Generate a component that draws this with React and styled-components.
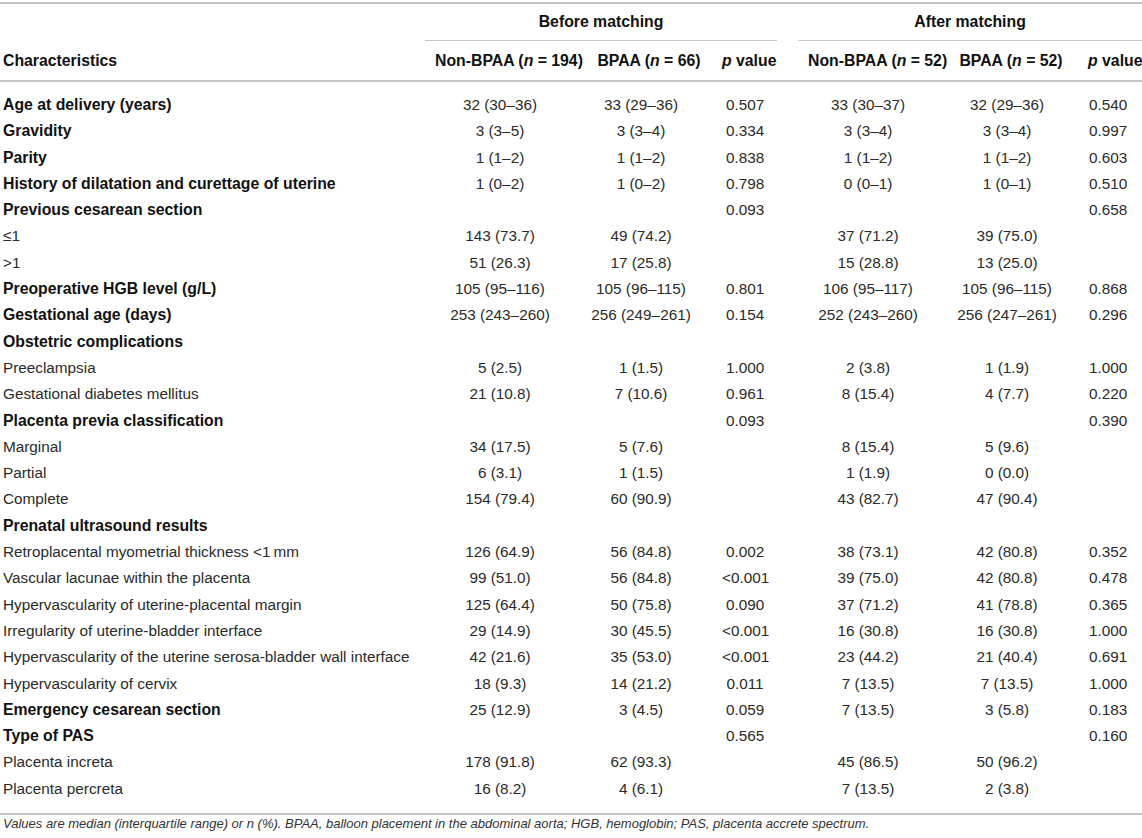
import React from "react";
import styled, { createGlobalStyle } from "styled-components";

const GlobalStyle = createGlobalStyle`
  html, body {
    margin: 0;
    padding: 0;
    background: #fff;
    overflow: hidden;
  }
  body {
    font-family: "Liberation Sans", Arial, Helvetica, sans-serif;
    color: #2a2a2a;
  }
`;

const Page = styled.div`
  width: 1142px;
  padding-top: 2px;
`;

const Table = styled.table`
  width: 1142px;
  table-layout: fixed;
  border-collapse: separate;
  border-spacing: 0;
  border-top: 2px solid #c3c3c3;
  border-bottom: 2px solid #c3c3c3;
  font-size: 15.3px;
`;

const HeadCell = styled.th`
  font-weight: bold;
  font-size: 15.8px;
  color: #111;
  white-space: nowrap;
  text-align: ${(p) => (p.$left ? "left" : "center")};
  padding: ${(p) => (p.$top ? "8px 3px 9px" : "10px 3px")};
  padding-left: ${(p) => (p.$left ? 3 : (p.$pad || 10) + (p.$shift || 0))}px;
  padding-right: ${(p) => (p.$left ? 3 : (p.$pad || 10) - (p.$shift || 0))}px;
  line-height: 19px;
  border-bottom: ${(p) =>
    p.$group ? "1px solid #c8c8c8" : p.$top ? "none" : "2px solid #c3c3c3"};
`;

const Row = styled.tr`
  &:first-child td {
    padding-top: 14px;
  }
  &:last-child td {
    padding-bottom: 15px;
  }
`;

const Cell = styled.td`
  padding: 4px 0;
  padding-left: ${(p) => (p.$left ? 3 : (p.$pad || 10) + (p.$shift || 0))}px;
  padding-right: ${(p) => (p.$left ? 3 : (p.$pad || 10) - (p.$shift || 0))}px;
  line-height: 18.3px;
  white-space: nowrap;
  text-align: ${(p) => (p.$left ? "left" : "center")};
  font-weight: ${(p) => (p.$bold ? "bold" : "normal")};
  font-size: ${(p) => (p.$bold ? "15.8px" : "15.3px")};
  color: ${(p) => (p.$bold ? "#111" : "#2a2a2a")};
`;

const Note = styled.p`
  margin: 0;
  padding: 1px 3px 0;
  font-size: 13px;
  line-height: 16px;
  font-style: italic;
  color: #333;
  white-space: nowrap;
`;

const I = styled.i`
  font-style: italic;
`;

// column widths: label, before x3, gap, after x3
const widths = [425, 152, 138, 62, 21, 140, 142, 62];
// side padding and horizontal shift of centred text per value column
const pads = [10, 10, 8, 10, 10, 4];
const dataShift = [-1, -5, -1, 0, -2, -3];
const headShift = [0, 3, -1, 0, 2, 4];

const rows = [
  ["Age at delivery (years)", true, "32 (30–36)", "33 (29–36)", "0.507", "33 (30–37)", "32 (29–36)", "0.540"],
  ["Gravidity", true, "3 (3–5)", "3 (3–4)", "0.334", "3 (3–4)", "3 (3–4)", "0.997"],
  ["Parity", true, "1 (1–2)", "1 (1–2)", "0.838", "1 (1–2)", "1 (1–2)", "0.603"],
  ["History of dilatation and curettage of uterine", true, "1 (0–2)", "1 (0–2)", "0.798", "0 (0–1)", "1 (0–1)", "0.510"],
  ["Previous cesarean section", true, "", "", "0.093", "", "", "0.658"],
  ["≤1", false, "143 (73.7)", "49 (74.2)", "", "37 (71.2)", "39 (75.0)", ""],
  [">1", false, "51 (26.3)", "17 (25.8)", "", "15 (28.8)", "13 (25.0)", ""],
  ["Preoperative HGB level (g/L)", true, "105 (95–116)", "105 (96–115)", "0.801", "106 (95–117)", "105 (96–115)", "0.868"],
  ["Gestational age (days)", true, "253 (243–260)", "256 (249–261)", "0.154", "252 (243–260)", "256 (247–261)", "0.296"],
  ["Obstetric complications", true, "", "", "", "", "", ""],
  ["Preeclampsia", false, "5 (2.5)", "1 (1.5)", "1.000", "2 (3.8)", "1 (1.9)", "1.000"],
  ["Gestational diabetes mellitus", false, "21 (10.8)", "7 (10.6)", "0.961", "8 (15.4)", "4 (7.7)", "0.220"],
  ["Placenta previa classification", true, "", "", "0.093", "", "", "0.390"],
  ["Marginal", false, "34 (17.5)", "5 (7.6)", "", "8 (15.4)", "5 (9.6)", ""],
  ["Partial", false, "6 (3.1)", "1 (1.5)", "", "1 (1.9)", "0 (0.0)", ""],
  ["Complete", false, "154 (79.4)", "60 (90.9)", "", "43 (82.7)", "47 (90.4)", ""],
  ["Prenatal ultrasound results", true, "", "", "", "", "", ""],
  ["Retroplacental myometrial thickness <1\u2009mm", false, "126 (64.9)", "56 (84.8)", "0.002", "38 (73.1)", "42 (80.8)", "0.352"],
  ["Vascular lacunae within the placenta", false, "99 (51.0)", "56 (84.8)", "<0.001", "39 (75.0)", "42 (80.8)", "0.478"],
  ["Hypervascularity of uterine-placental margin", false, "125 (64.4)", "50 (75.8)", "0.090", "37 (71.2)", "41 (78.8)", "0.365"],
  ["Irregularity of uterine-bladder interface", false, "29 (14.9)", "30 (45.5)", "<0.001", "16 (30.8)", "16 (30.8)", "1.000"],
  ["Hypervascularity of the uterine serosa-bladder wall interface", false, "42 (21.6)", "35 (53.0)", "<0.001", "23 (44.2)", "21 (40.4)", "0.691"],
  ["Hypervascularity of cervix", false, "18 (9.3)", "14 (21.2)", "0.011", "7 (13.5)", "7 (13.5)", "1.000"],
  ["Emergency cesarean section", true, "25 (12.9)", "3 (4.5)", "0.059", "7 (13.5)", "3 (5.8)", "0.183"],
  ["Type of PAS", true, "", "", "0.565", "", "", "0.160"],
  ["Placenta increta", false, "178 (91.8)", "62 (93.3)", "", "45 (86.5)", "50 (96.2)", ""],
  ["Placenta percreta", false, "16 (8.2)", "4 (6.1)", "", "7 (13.5)", "2 (3.8)", ""],
];

const groupHeads = (n1, n2) => [
  <>Non-BPAA (<I>n</I> = {n1})</>,
  <>BPAA (<I>n</I> = {n2})</>,
  <><I>p</I> value</>,
];

export default function App() {
  const heads = [...groupHeads(194, 66), ...groupHeads(52, 52)];
  const headCells = (from) =>
    heads.slice(from, from + 3).map((h, i) => (
      <HeadCell key={i} $pad={pads[from + i]} $shift={headShift[from + i]}>
        {h}
      </HeadCell>
    ));
  const valueCells = (vals, from) =>
    vals.slice(from, from + 3).map((v, i) => (
      <Cell key={i} $pad={pads[from + i]} $shift={dataShift[from + i]}>
        {v}
      </Cell>
    ));

  return (
    <Page>
      <GlobalStyle />
      <Table>
        <colgroup>
          {widths.map((w, i) => (
            <col key={i} style={{ width: w }} />
          ))}
        </colgroup>
        <thead>
          <tr>
            <HeadCell $top $left />
            <HeadCell $top $group colSpan={3}>Before matching</HeadCell>
            <HeadCell $top />
            <HeadCell $top $group colSpan={3}>After matching</HeadCell>
          </tr>
          <tr>
            <HeadCell $left>Characteristics</HeadCell>
            {headCells(0)}
            <HeadCell />
            {headCells(3)}
          </tr>
        </thead>
        <tbody>
          {rows.map(([label, bold, ...vals]) => (
            <Row key={label}>
              <Cell $left $bold={bold}>{label}</Cell>
              {valueCells(vals, 0)}
              <Cell />
              {valueCells(vals, 3)}
            </Row>
          ))}
        </tbody>
      </Table>
      <Note>
        Values are median (interquartile range) or n (%). BPAA, balloon placement in the abdominal aorta; HGB,
        hemoglobin; PAS, placenta accrete spectrum.
      </Note>
    </Page>
  );
}
